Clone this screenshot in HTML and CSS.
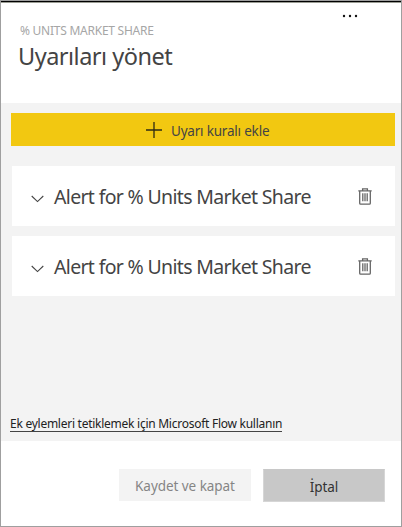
FILE: index.html
```html
<!DOCTYPE html>
<html lang="tr">
<head>
<meta charset="utf-8">
<title>Uyarıları yönet</title>
<link rel="stylesheet" href="styles.css">
</head>
<body>
<main class="panel">
  <header class="header">
    <svg class="more" width="16" height="4" viewBox="0 0 16 4" fill="#111"><circle cx="2" cy="2" r="1.2"/><circle cx="8" cy="2" r="1.2"/><circle cx="14" cy="2" r="1.2"/></svg>
    <p class="subtitle">% UNITS MARKET SHARE</p>
    <h1 class="title">Uyarıları yönet</h1>
  </header>
  <section class="content">
    <button class="add">
      <svg width="16" height="16" viewBox="0 0 16 16" stroke="#2e2b14" stroke-width="1.3"><path d="M8 0v16M0 8h16"/></svg>
      <span class="add-label">Uyarı kuralı ekle</span>
    </button>
    <article class="card">
      <svg class="chevron" width="13" height="8" viewBox="0 0 13 8" fill="none" stroke="#444" stroke-width="1.1"><path d="M.7 1l5.800 5.600L12.300 1"/></svg>
      <h2 class="name">Alert for % Units Market Share</h2>
      <svg class="trash" width="14" height="17" viewBox="0 0 14 17" fill="none" stroke="#666" stroke-width="1.3"><path d="M.3 2.800h13.400M4.600 2.500V.9h4.800v1.600M1.700 3v12.300q0 .9.900.9h8.800q.9 0 .9-.9V3"/><path d="M4.800 5.200v8M7 5.200v8M9.200 5.200v8"/></svg>
    </article>
    <article class="card">
      <svg class="chevron" width="13" height="8" viewBox="0 0 13 8" fill="none" stroke="#444" stroke-width="1.1"><path d="M.7 1l5.800 5.600L12.300 1"/></svg>
      <h2 class="name">Alert for % Units Market Share</h2>
      <svg class="trash" width="14" height="17" viewBox="0 0 14 17" fill="none" stroke="#666" stroke-width="1.3"><path d="M.3 2.800h13.400M4.600 2.500V.9h4.800v1.600M1.700 3v12.300q0 .9.900.9h8.800q.9 0 .9-.9V3"/><path d="M4.800 5.200v8M7 5.200v8M9.200 5.200v8"/></svg>
    </article>
    <a class="flow">Ek eylemleri tetiklemek için Microsoft Flow kullanın</a>
  </section>
  <footer class="footer">
    <button class="btn save">Kaydet ve kapat</button>
    <button class="btn cancel">İptal</button>
  </footer>
</main>
</body>
</html>
```
FILE: styles.css
```css
* { box-sizing: border-box; margin: 0; padding: 0; }
body {
  width: 402px;
  height: 527px;
  overflow: hidden;
  font-family: "Noto Sans", "Open Sans", sans-serif;
  color: #444;
}
svg { display: block; flex: none; }
button { border: 0; font-family: inherit; }
.panel {
  display: flex;
  flex-direction: column;
  height: 527px;
  border: 1px solid #9f9f9f;
  background: #fff;
}
.header {
  position: relative;
  height: 102px;
  border-top: 1px solid #000;
  box-shadow: inset 0 1px #9b9d94;
  padding: 20px 0 0 19px;
  white-space: nowrap;
}
.more { position: absolute; left: 341px; top: 12px; }
.subtitle { font-size: 12px; line-height: 18px; letter-spacing: -.25px; color: #a6a6a6; }
.title { margin: 0 0 0 -2px; font-size: 23.500px; line-height: 32px; font-weight: 400; letter-spacing: -.5px; }
.content {
  display: flex;
  flex-direction: column;
  height: 338px;
  padding: 10px 6px 9px 9px;
  background: #f3f3f3;
}
.add {
  display: flex;
  align-items: center;
  height: 33px;
  margin: 0 0 20px .5px;
  padding-left: 135.500px;
  gap: 9px;
  background: #f2c811;
  color: #444;
}
.add-label { font-size: 13.500px; letter-spacing: -.2px; white-space: nowrap; padding-top: 2px; }
.card {
  display: flex;
  align-items: center;
  height: 60px;
  margin: 0 0 10px 2px;
  padding: 0 23px 0 19px;
  background: #fff;
}
.chevron { margin-top: 6px; }
.name { margin-left: 10px; font-size: 19.500px; font-weight: 400; letter-spacing: -.67px; white-space: nowrap; }
.trash { margin-left: auto; }
.flow {
  align-self: flex-start;
  margin-top: auto;
  font-size: 12px;
  line-height: 15px;
  letter-spacing: -.26px;
  white-space: nowrap;
  color: #222;
  border-bottom: 1px solid #444;
}
.footer {
  display: flex;
  justify-content: flex-end;
  gap: 12px;
  padding: 28px 16px 0 0;
}
.btn { height: 33px; font-size: 13.500px; letter-spacing: -.05px; padding-top: 2px; white-space: nowrap; }
.save { width: 132px; height: 32px; background: #f3f3f3; color: #858585; }
.cancel { width: 122px; background: #c8c8c8; border: 1px solid #d6d6d6; border-top-color: #c8c8c8; color: #333; }
```
